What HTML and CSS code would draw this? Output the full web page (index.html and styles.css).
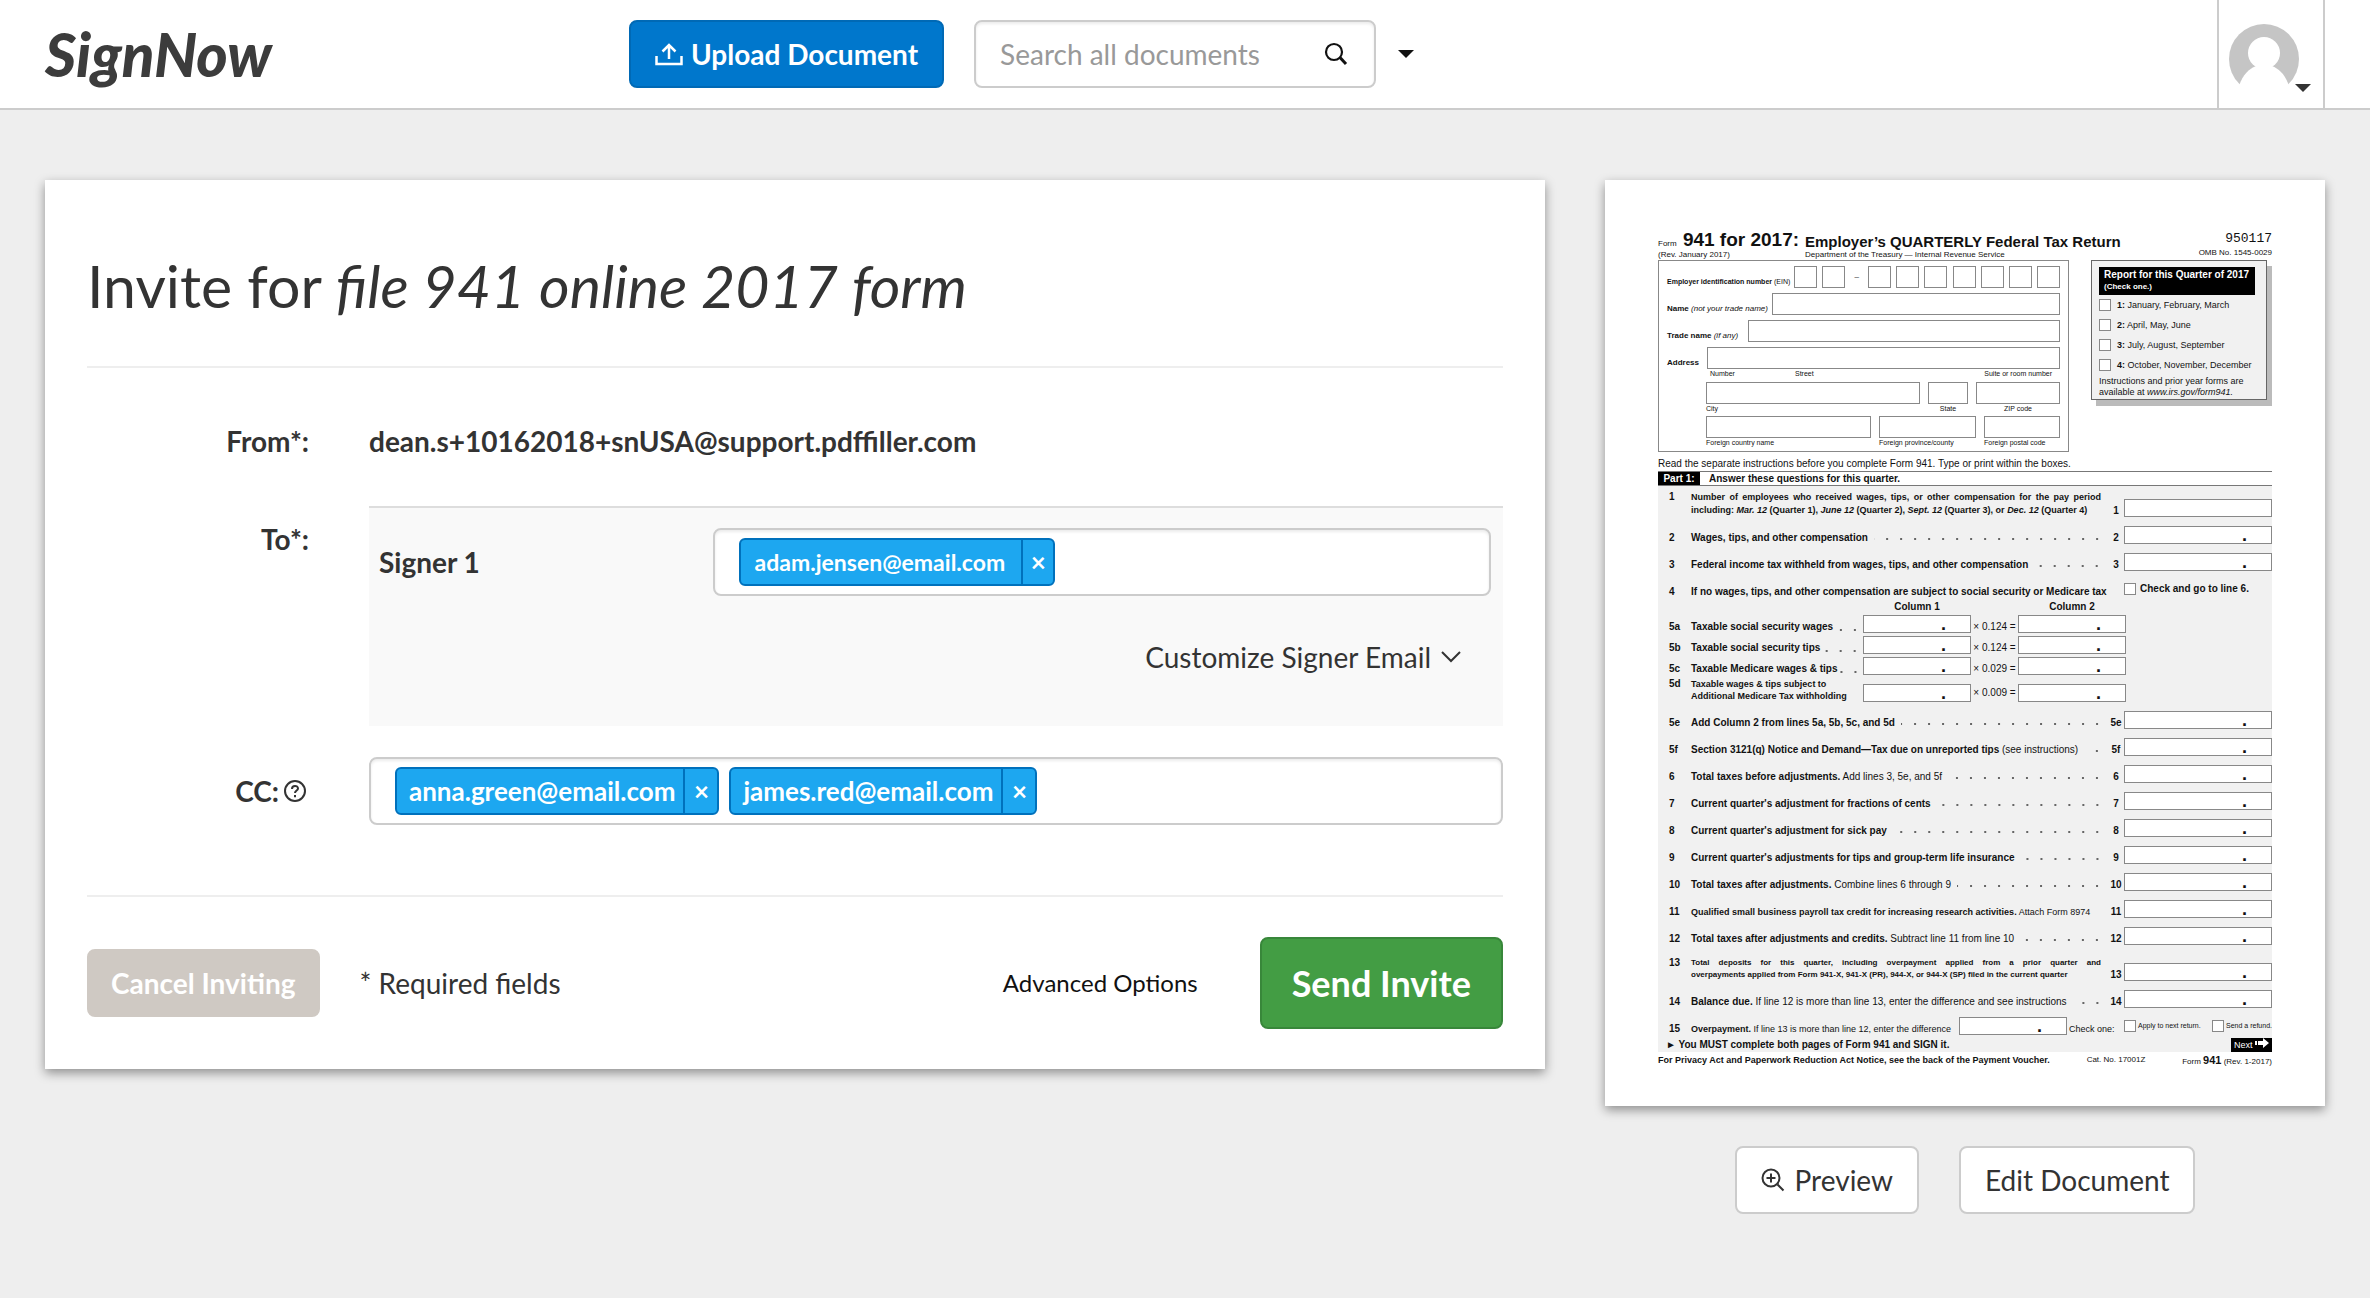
FILE: index.html
```html
<!DOCTYPE html>
<html lang="en">
<head>
    <meta charset="UTF-8">
    <meta name="viewport" content="width=device-width, initial-scale=1.0">
    <title>SignNow - Invite</title>
    <link rel="stylesheet" href="styles.css">
</head>
<body>
    <header class="header">
        <a class="logo" href="#">SignNow</a>
        <div class="header-tools">
            <button class="btn btn-upload" type="button">
                <svg width="28" height="24" viewBox="0 0 28 24" fill="none" stroke="currentColor" stroke-width="2.500">
                    <path d="M1.500 14v8h25V14"/>
                    <path d="M14 17V3M7.500 9.500L14 3l6.500 6.500"/>
                </svg>
                Upload Document
            </button>
            <form class="search">
                <input type="text" id="search" aria-label="Search all documents" placeholder="Search all documents">
                <button type="button" aria-label="Search">
                    <svg width="24" height="24" viewBox="0 0 24 24" fill="none" stroke="currentColor" stroke-width="2.200">
                        <circle cx="10" cy="10" r="8"/>
                        <path d="M16 15.500l6 6.500" stroke-width="3"/>
                    </svg>
                </button>
            </form>
            <button class="caret-btn" type="button" aria-label="Search options"><span class="caret"></span></button>
        </div>
        <button class="account" type="button" aria-label="Account">
            <svg width="70" height="70" viewBox="0 0 70 70">
                <circle cx="35" cy="35" r="35" fill="#c5c5c5"/>
                <circle cx="35" cy="29" r="16" fill="#fff"/>
                <path d="M10 62C14 50 20 45 27 42h16c7 3 13 8 17 20v8H10z" fill="#fff"/>
            </svg>
            <span class="caret"></span>
        </button>
    </header>

    <main class="page">
        <form class="card invite">
            <h1>Invite for <em>file 941 online 2017 form</em></h1>
            <div class="fields">
                <div class="label">From*:</div>
                <div class="from">dean.s+10162018+snUSA@support.pdffiller.com</div>

                <label class="label label-to" for="signer">To*:</label>
                <div class="signers">
                    <div class="signer">
                        <label class="signer-name" for="signer">Signer 1</label>
                        <div class="token-box">
                            <span class="token token-small"><span>adam.jensen@email.com</span><button type="button" aria-label="Remove adam.jensen@email.com">×</button></span>
                            <input type="text" id="signer">
                        </div>
                    </div>
                    <button class="customize" type="button">
                        Customize Signer Email
                        <svg width="20" height="12" viewBox="0 0 20 12" fill="none" stroke="currentColor" stroke-width="2"><path d="M1 1l9 9 9-9"/></svg>
                    </button>
                </div>

                <label class="label label-cc" for="cc">CC:<svg width="24" height="24" viewBox="0 0 24 24" fill="none" stroke="currentColor" stroke-width="2">
                        <circle cx="12" cy="12" r="10"/>
                        <path d="M9 10c0-4 6-4 6-.5 0 2-3 2-3 4.500M12 16v2.200"/>
                    </svg></label>
                <div class="token-box">
                    <span class="token"><span>anna.green@email.com</span><button type="button" aria-label="Remove anna.green@email.com">×</button></span>
                    <span class="token"><span>james.red@email.com</span><button type="button" aria-label="Remove james.red@email.com">×</button></span>
                    <input type="text" id="cc">
                </div>
            </div>
            <div class="actions">
                <button class="btn btn-cancel" type="button">Cancel Inviting</button>
                <span class="required">* Required fields</span>
                <a class="advanced" href="#">Advanced Options</a>
                <button class="btn btn-send" type="button">Send Invite</button>
            </div>
        </form>

        <aside class="preview">
            <div class="card doc">
                <div class="doc-head">
                    <div class="doc-form">
                        <div>Form <b class="doc-number">941 for 2017:</b></div>
                        <div>(Rev. January 2017)</div>
                    </div>
                    <div class="doc-title">
                        <h2>Employer’s QUARTERLY Federal Tax Return</h2>
                        <div>Department of the Treasury — Internal Revenue Service</div>
                    </div>
                    <div class="doc-code">
                        <div class="ocr">950117</div>
                        <div>OMB No. 1545-0029</div>
                    </div>
                </div>

                <div class="doc-top">
                    <div class="employer">
                        <div class="emp-row">
                            <div class="emp-label ein-label"><b>Employer identification number</b> (EIN)</div>
                            <div class="ein">
                                <input aria-label="EIN digit 1"><input aria-label="EIN digit 2"><span>–</span><input aria-label="EIN digit 3"><input aria-label="EIN digit 4"><input aria-label="EIN digit 5"><input aria-label="EIN digit 6"><input aria-label="EIN digit 7"><input aria-label="EIN digit 8"><input aria-label="EIN digit 9">
                            </div>
                        </div>
                        <div class="emp-row"><label class="emp-label" for="emp-name"><b>Name</b> <i>(not your trade name)</i></label><input id="emp-name"></div>
                        <div class="emp-row emp-trade"><label class="emp-label" for="emp-trade"><b>Trade name</b> <i>(if any)</i></label><input id="emp-trade"></div>
                        <div class="emp-row emp-address"><label class="emp-label" for="emp-address"><b>Address</b></label><input id="emp-address"></div>
                        <div class="sub"><span>Number</span><span>Street</span><span>Suite or room number</span></div>
                        <div class="triple triple-city">
                            <label><input>City</label>
                            <label class="mid"><input>State</label>
                            <label class="mid"><input>ZIP code</label>
                        </div>
                        <div class="triple triple-foreign">
                            <label><input>Foreign country name</label>
                            <label><input>Foreign province/county</label>
                            <label><input>Foreign postal code</label>
                        </div>
                    </div>
                    <div class="quarter">
                        <div class="quarter-head">Report for this Quarter of 2017<small>(Check one.)</small></div>
                        <label><input type="checkbox"><span><b>1:</b> January, February, March</span></label>
                        <label><input type="checkbox"><span><b>2:</b> April, May, June</span></label>
                        <label><input type="checkbox"><span><b>3:</b> July, August, September</span></label>
                        <label><input type="checkbox"><span><b>4:</b> October, November, December</span></label>
                        <div class="quarter-note">
                            <div>Instructions and prior year forms are</div>
                            <div>available at <i>www.irs.gov/form941.</i></div>
                        </div>
                    </div>
                </div>

                <p class="doc-read">Read the separate instructions before you complete Form 941. Type or print within the boxes.</p>
                <div class="part"><b>Part 1:</b><strong>Answer these questions for this quarter.</strong></div>

                <div class="lines">
                    <div class="line line-double">
                        <span class="no">1</span>
                        <label for="l1"><b class="spread">Number of employees who received wages, tips, or other compensation for the pay period</b><b>including: <i>Mar. 12</i> (Quarter 1), <i>June 12</i> (Quarter 2), <i>Sept. 12</i> (Quarter 3), or <i>Dec. 12</i> (Quarter 4)</b></label>
                        <span class="ref">1</span><input id="l1">
                    </div>
                    <div class="line"><span class="no">2</span><label for="l2"><b>Wages, tips, and other compensation</b></label><span class="dots"></span><span class="ref">2</span><input id="l2" value="."></div>
                    <div class="line"><span class="no">3</span><label for="l3"><b>Federal income tax withheld from wages, tips, and other compensation</b></label><span class="dots"></span><span class="ref">3</span><input id="l3" value="."></div>
                    <div class="line line-4"><span class="no">4</span><b>If no wages, tips, and other compensation are subject to social security or Medicare tax</b><label class="check-line"><input type="checkbox"><b>Check and go to line 6.</b></label></div>

                    <div class="columns">
                        <b class="col-1">Column 1</b><b class="col-2">Column 2</b>
                        <span class="no">5a</span><label for="l5a"><b>Taxable social security wages</b><span class="dots"></span></label><input id="l5a" value="."><span>× 0.124 =</span><input aria-label="5a column 2" value=".">
                        <span class="no">5b</span><label for="l5b"><b>Taxable social security tips</b><span class="dots"></span></label><input id="l5b" value="."><span>× 0.124 =</span><input aria-label="5b column 2" value=".">
                        <span class="no">5c</span><label for="l5c"><b>Taxable Medicare wages &amp; tips</b><span class="dots"></span></label><input id="l5c" value="."><span>× 0.029 =</span><input aria-label="5c column 2" value=".">
                        <span class="no no-top">5d</span><label class="two-lines" for="l5d"><b>Taxable wages &amp; tips subject to<br>Additional Medicare Tax withholding</b></label><input id="l5d" value="."><span>× 0.009 =</span><input aria-label="5d column 2" value=".">
                    </div>

                    <div class="line"><span class="no">5e</span><label for="l5e"><b>Add Column 2 from lines 5a, 5b, 5c, and 5d</b></label><span class="dots"></span><span class="ref">5e</span><input id="l5e" value="."></div>
                    <div class="line"><span class="no">5f</span><label for="l5f"><b>Section 3121(q) Notice and Demand—Tax due on unreported tips</b> (see instructions)</label><span class="dots"></span><span class="ref">5f</span><input id="l5f" value="."></div>
                    <div class="line"><span class="no">6</span><label for="l6"><b>Total taxes before adjustments.</b> Add lines 3, 5e, and 5f</label><span class="dots"></span><span class="ref">6</span><input id="l6" value="."></div>
                    <div class="line"><span class="no">7</span><label for="l7"><b>Current quarter's adjustment for fractions of cents</b></label><span class="dots"></span><span class="ref">7</span><input id="l7" value="."></div>
                    <div class="line"><span class="no">8</span><label for="l8"><b>Current quarter's adjustment for sick pay</b></label><span class="dots"></span><span class="ref">8</span><input id="l8" value="."></div>
                    <div class="line"><span class="no">9</span><label for="l9"><b>Current quarter's adjustments for tips and group-term life insurance</b></label><span class="dots"></span><span class="ref">9</span><input id="l9" value="."></div>
                    <div class="line"><span class="no">10</span><label for="l10"><b>Total taxes after adjustments.</b> Combine lines 6 through 9</label><span class="dots"></span><span class="ref">10</span><input id="l10" value="."></div>
                    <div class="line line-tight"><span class="no">11</span><label for="l11"><b>Qualified small business payroll tax credit for increasing research activities.</b> Attach Form 8974</label><span class="ref">11</span><input id="l11" value="."></div>
                    <div class="line"><span class="no">12</span><label for="l12"><b>Total taxes after adjustments and credits.</b> Subtract line 11 from line 10</label><span class="dots"></span><span class="ref">12</span><input id="l12" value="."></div>
                    <div class="line line-double line-13">
                        <span class="no">13</span>
                        <label for="l13"><b class="spread">Total deposits for this quarter, including overpayment applied from a prior quarter and</b><b>overpayments applied from Form 941-X, 941-X (PR), 944-X, or 944-X (SP) filed in the current quarter</b></label>
                        <span class="ref">13</span><input id="l13" value=".">
                    </div>
                    <div class="line"><span class="no">14</span><label for="l14"><b>Balance due.</b> If line 12 is more than line 13, enter the difference and see instructions</label><span class="dots"></span><span class="ref">14</span><input id="l14" value="."></div>
                    <div class="line line-tight line-over"><span class="no">15</span><label for="l15"><b>Overpayment.</b> If line 13 is more than line 12, enter the difference</label><input id="l15" value="."><span class="check-one">Check one:</span><div class="check-pair"><label><input type="checkbox">Apply to next return.</label><label><input type="checkbox">Send a refund.</label></div></div>
                    <div class="must"><b>► You MUST complete both pages of Form 941 and SIGN it.</b>
                        <span class="next">Next <svg width="14" height="10" viewBox="0 0 14 10" fill="currentColor"><path d="M0 3h2v4H0zM3 3h5V0l6 5-6 5V7H3z"/></svg></span>
                    </div>
                </div>
                <div class="doc-foot"><b>For Privacy Act and Paperwork Reduction Act Notice, see the back of the Payment Voucher.</b><span>Cat. No. 17001Z</span><span>Form <b class="foot-number">941</b> (Rev. 1-2017)</span></div>
            </div>

            <div class="doc-buttons">
                <button class="btn btn-light" type="button">
                    <svg width="24" height="24" viewBox="0 0 24 24" fill="none" stroke="currentColor" stroke-width="2">
                        <circle cx="10" cy="10" r="8.500"/>
                        <path d="M10 5.500v9M5.500 10h9M16.500 16.500l6 6"/>
                    </svg>
                    Preview
                </button>
                <button class="btn btn-light" type="button">Edit Document</button>
            </div>
        </aside>
    </main>
</body>
</html>
```

FILE: styles.css
```css
* {
    margin: 0;
    padding: 0;
    box-sizing: border-box;
}

body {
    background-color: #eee;
    font-family: Lato, sans-serif;
    font-size: 28px;
    line-height: 34px;
    color: #333;
}

button,
input {
    font: inherit;
    color: inherit;
    background: none;
    border: none;
    outline: none;
}

button {
    cursor: pointer;
}

a {
    color: inherit;
    text-decoration: none;
}

/* header */

.header {
    display: grid;
    grid-template-columns: 584px 1fr auto;
    height: 110px;
    padding: 0 45px;
    background-color: #fff;
    border-bottom: 2px solid #ccc;
}

.logo {
    align-self: center;
    font-size: 60px;
    line-height: 72px;
    font-weight: 900;
    font-style: italic;
    color: #3c3c3c;
}

.header-tools {
    display: flex;
    align-items: center;
}

.btn {
    display: flex;
    align-items: center;
    justify-content: center;
    gap: 10px;
    height: 68px;
    padding: 0 24px;
    border: 2px solid;
    border-radius: 8px;
    white-space: nowrap;
}

.btn-upload {
    gap: 8px;
    background-color: #0077cc;
    border-color: #0069b5;
    color: #fff;
    font-weight: bold;
}

.search {
    display: flex;
    align-items: center;
    width: 402px;
    height: 68px;
    margin-left: 30px;
    padding: 0 26px 0 24px;
    border: 2px solid #ccc;
    border-radius: 8px;
    box-shadow: inset 0 2px 3px rgba(0, 0, 0, 0.08);
}

.search input {
    flex: 1;
    min-width: 0;
}

.search input::placeholder {
    color: #999;
    opacity: 1;
}

.search button {
    display: flex;
    color: #111;
}

.caret-btn {
    padding: 10px 22px;
    color: #111;
}

.caret {
    display: block;
    border: 8px solid transparent;
    border-top-color: currentColor;
    border-bottom: none;
}

.account {
    position: relative;
    width: 108px;
    padding: 10px 10px 0;
    border-left: 2px solid #ccc;
    border-right: 2px solid #ccc;
}

.account svg {
    display: block;
}

.account .caret {
    position: absolute;
    right: 12px;
    bottom: 16px;
}

/* page */

.page {
    display: grid;
    grid-template-columns: 25fr 12fr;
    gap: 60px;
    align-items: start;
    padding: 70px 45px;
}

.card {
    background-color: #fff;
    box-shadow: 0 4px 10px rgba(0, 0, 0, 0.4);
}

.invite {
    padding: 70px 42px 40px;
}

.invite h1 {
    padding-bottom: 44px;
    border-bottom: 2px solid #eee;
    font-size: 59px;
    line-height: 72px;
    font-weight: normal;
}

.fields {
    display: grid;
    grid-template-columns: 222px 1fr;
    column-gap: 60px;
    padding: 56px 0 70px;
    border-bottom: 2px solid #eee;
}

.label {
    text-align: right;
    font-weight: bold;
}

.from {
    font-weight: bold;
}

.label-to,
.signers {
    margin-top: 48px;
}

.label-to {
    padding-top: 16px;
}

.signers {
    height: 220px;
    padding: 20px 12px 0 10px;
    background-color: #f9f9f9;
    border-top: 2px solid #ddd;
}

.signer {
    display: grid;
    grid-template-columns: 30% 1fr;
    align-items: center;
}

.signer-name {
    font-weight: bold;
}

.token-box {
    display: flex;
    align-items: center;
    gap: 10px;
    height: 68px;
    padding: 0 24px;
    background-color: #fff;
    border: 2px solid #ccc;
    border-radius: 8px;
    box-shadow: inset 0 2px 3px rgba(0, 0, 0, 0.08);
}

.token-box input {
    flex: 1;
    min-width: 0;
}

.token {
    display: flex;
    height: 48px;
    line-height: 44px;
    border: 2px solid #0071bc;
    border-radius: 6px;
    background-color: #1da7f0;
    color: #fff;
    font-size: 26px;
    font-weight: bold;
}

.token span {
    padding: 0 8px 0 12px;
}

.token button {
    width: 34px;
    border-left: 2px solid #0071bc;
}

.token-small {
    font-size: 23px;
}

.token-small span {
    padding: 0 16px 0 14px;
}

.token-small button {
    width: 32px;
    font-size: 26px;
}

.customize {
    display: flex;
    align-items: center;
    gap: 10px;
    margin: 44px 30px 0 auto;
}

.label-cc,
.label-cc + .token-box {
    margin-top: 31px;
}

.label-cc {
    display: flex;
    align-items: center;
    justify-content: flex-end;
    gap: 4px;
    padding-right: 2px;
}

.actions {
    display: flex;
    align-items: center;
    margin-top: 40px;
}

.btn-cancel {
    background-color: #cfc9c3;
    border-color: #cfc9c3;
    padding: 0 22px;
    color: #fff;
    font-weight: bold;
}

.required {
    margin-left: 40px;
}

.advanced {
    margin-left: auto;
    font-size: 24px;
    color: #111;
}

.btn-send {
    height: 92px;
    margin-left: 62px;
    padding: 0 30px;
    background-color: #439d44;
    border-color: #38873a;
    color: #fff;
    font-size: 36px;
    font-weight: bold;
}

.doc-buttons {
    display: flex;
    justify-content: center;
    gap: 40px;
    margin-top: 40px;
}

.btn-light {
    background-color: #fff;
    border-color: #ccc;
}

/* document thumbnail */

.doc {
    padding: 50px 53px 36px;
    font-family: "Liberation Sans", sans-serif;
    font-size: 8px;
    line-height: 10px;
    color: #111;
}

.doc input {
    display: block;
    min-width: 0;
    background-color: #fff;
    border: 1px solid #888;
}

.doc input[type="checkbox"] {
    appearance: none;
    width: 12px;
    height: 12px;
    flex: none;
}

.doc-head {
    display: grid;
    grid-template-columns: 147px 1fr auto;
    height: 30px;
}

.doc-number {
    margin-left: 4px;
    font-size: 19px;
    line-height: 20px;
}

.doc-title h2 {
    padding-top: 3px;
    font-size: 15px;
    line-height: 17px;
    white-space: nowrap;
}

.doc-code {
    text-align: right;
}

.ocr {
    font-family: "Liberation Mono", monospace;
    font-size: 13px;
    line-height: 18px;
}

.doc-top {
    display: flex;
    justify-content: space-between;
    align-items: flex-start;
}

.employer {
    width: 411px;
    height: 192px;
    padding: 5px 8px;
    border: 1px solid #888;
}

.emp-row {
    display: flex;
    gap: 4px;
    height: 22px;
    margin-bottom: 5px;
    white-space: nowrap;
}

.emp-row > input {
    flex: 1;
}

.emp-row input,
.triple input {
    height: 22px;
}

/* captions sit near the bottom edge of their boxes */
.emp-label {
    padding-top: 11px;
}

.ein-label {
    font-size: 7px;
}

.ein {
    display: flex;
    flex: 1;
    justify-content: space-between;
}

.ein input {
    width: 23px;
}

.ein span {
    padding: 6px 4px 0;
}

.emp-trade {
    gap: 10px;
}

.emp-address {
    gap: 8px;
    margin-bottom: 0;
}

.sub,
.triple {
    margin-left: 39px;
    font-size: 7px;
    line-height: 10px;
}

.sub {
    display: grid;
    grid-template-columns: 85px 1fr auto;
    height: 13px;
    padding: 0 8px 0 4px;
}

.triple {
    display: grid;
    column-gap: 8px;
    height: 34px;
    text-indent: 4px;
}

.triple-city {
    grid-template-columns: 214px 1fr 84px;
}

.triple-foreign {
    grid-template-columns: 165px 1fr 76px;
}

.triple input {
    width: 100%;
}

.mid {
    text-align: center;
}

.quarter {
    width: 176px;
    height: 140px;
    margin-right: 5px;
    padding: 6px 7px 0;
    background-color: #f1f1f1;
    border: 1px solid #666;
    box-shadow: 5px 6px 0 #bbb;
}

.quarter-head {
    width: 156px;
    height: 28px;
    margin-bottom: 4px;
    padding: 2px 5px;
    background-color: #000;
    color: #fff;
    font-size: 10px;
    line-height: 12px;
    font-weight: bold;
    white-space: nowrap;
}

.quarter-head small {
    display: block;
    font-size: 8px;
}

.quarter label {
    display: flex;
    gap: 6px;
    align-items: center;
    height: 12px;
    margin-bottom: 8px;
    font-size: 9px;
    white-space: nowrap;
}

.quarter-note {
    margin-top: -3px;
    font-size: 9px;
    line-height: 11px;
}

.doc-read {
    margin: 7px 0 2px;
    font-size: 10px;
}

.part {
    display: flex;
    height: 15px;
    border-top: 1px solid #777;
    border-bottom: 1px solid #777;
    font-size: 10px;
    line-height: 13px;
}

.part b {
    width: 42px;
    margin-right: 9px;
    background-color: #000;
    color: #fff;
    text-align: center;
}

.lines {
    padding-top: 4px;
    background-color: #f1f1f1;
    font-size: 10px;
}

.line {
    display: flex;
    align-items: center;
    height: 18px;
    margin-bottom: 9px;
    white-space: nowrap;
}

.line > label,
.line > b,
.line > span,
.columns > label,
.columns > span {
    padding-top: 5px;
}

.no {
    width: 33px;
    padding-left: 11px;
    font-weight: bold;
}

.line .ref {
    width: 16px;
    margin-left: auto;
    text-align: center;
    font-weight: bold;
}

.line > input {
    width: 148px;
    height: 18px;
}

.lines input {
    padding-right: 24px;
    text-align: right;
    font-size: 18px;
    line-height: 14px;
    font-weight: bold;
}

.lines input[type="checkbox"] {
    padding: 0;
}

.line > .dots,
.columns .dots {
    flex: 1;
    height: 14px;
    margin: 0 9px 0 6px;
    padding: 0;
    background: radial-gradient(circle at 12px 11px, #666 1px, transparent 1px) right top / 14px 14px repeat-x;
}

.columns .dots {
    height: 10px;
    margin: 0 6px 0 0;
    background-position: right -3px;
}

.line-tight label,
.check-one {
    font-size: 9px;
}

.line-double {
    align-items: flex-end;
    height: 27px;
    font-size: 9px;
    line-height: 13px;
}

.line-double label {
    flex: none;
    width: 410px;
    padding: 0;
}

.line-double label b {
    display: block;
}

.line-double .no {
    align-self: flex-start;
    padding-top: 0;
    font-size: 10px;
}

.line-double .ref {
    font-size: 10px;
}

.spread {
    text-align-last: justify;
}

.line-4 {
    margin-bottom: 4px;
}

.line .check-line {
    display: flex;
    align-items: center;
    gap: 4px;
    width: 148px;
    margin-left: auto;
    padding: 0;
}

.columns {
    display: grid;
    grid-template-columns: 33px 172px 108px 47px 108px;
    align-items: center;
    row-gap: 3px;
    margin-bottom: 9px;
    white-space: nowrap;
}

.columns > input {
    align-self: end;
    height: 18px;
}

.columns label {
    display: flex;
}

.columns .two-lines {
    padding: 0;
    font-size: 9px;
    line-height: 12px;
}

.columns > span:not(.no) {
    text-align: center;
}

.col-1 {
    grid-column: 3;
    text-align: center;
}

.col-2 {
    grid-column: 5;
    text-align: center;
}

.columns .no-top {
    align-self: start;
    padding-top: 1px;
}

.line-13 {
    height: 24px;
    margin-top: 12px;
    font-size: 8px;
    line-height: 12px;
}

.line-over {
    margin-bottom: 3px;
}

.line.line-over > input {
    width: 108px;
    margin-left: auto;
}

.check-one {
    width: 57px;
    padding-left: 2px;
}

.check-pair {
    display: flex;
    justify-content: space-between;
    width: 148px;
}

.check-pair label {
    display: flex;
    align-items: center;
    gap: 2px;
    font-size: 7px;
}

.must {
    display: flex;
    justify-content: space-between;
    padding-left: 8px;
    line-height: 14px;
}

.next {
    padding: 0 3px;
    background-color: #000;
    color: #fff;
    font-size: 9px;
}

.doc-foot {
    display: flex;
    justify-content: space-between;
    line-height: 16px;
}

.doc-foot > b {
    font-size: 9px;
}

.foot-number {
    font-size: 11px;
}
```
